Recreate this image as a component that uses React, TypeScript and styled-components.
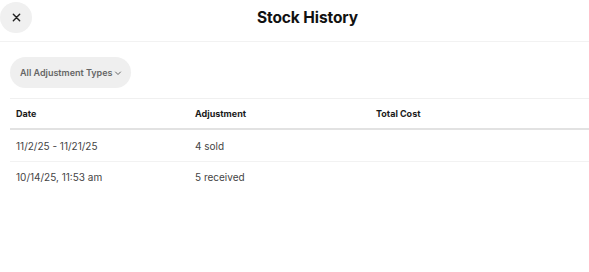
import React from "react";
import styled, { createGlobalStyle } from "styled-components";

const Global = createGlobalStyle`
  html, body { margin: 0; padding: 0; background: #fff; }
  body { font-family: Inter, "Noto Sans", Arial, sans-serif; color: #1a1a1a; -webkit-font-smoothing: antialiased; }
`;

const Page = styled.div`
  width: 589px;
  height: 272px;
  overflow: hidden;
  background: #fff;
`;

const Header = styled.header`
  display: grid;
  grid-template-columns: 32px 1fr;
  align-items: start;
  height: 42px;
  border-bottom: 1px solid #f2f2f2;
  box-sizing: border-box;
`;

const CloseButton = styled.button`
  width: 32px;
  height: 31px;
  margin-top: 2px;
  border: none;
  border-radius: 50%;
  background: #f0f0f0;
  display: flex;
  align-items: center;
  justify-content: center;
  padding: 0;
  cursor: pointer;
`;

const Title = styled.h1`
  margin: 0 6px 0 0;
  justify-self: center;
  line-height: 36px;
  font-size: 15.5px;
  font-weight: 700;
  letter-spacing: -0.1px;
  color: #111;
`;

const Body = styled.div`
  padding: 15px 0 0 10px;
`;

const FilterPill = styled.button`
  display: inline-flex;
  align-items: center;
  gap: 2px;
  height: 31px;
  padding: 0 9px 0 10px;
  border: none;
  border-radius: 16px;
  background: #efefef;
  font-family: inherit;
  font-size: 9px;
  font-weight: 600;
  color: #666;
  cursor: pointer;
`;

const Table = styled.div`
  margin-top: 10px;
  border-top: 1px solid #f0f0f0;
`;

const Row = styled.div<{ $head?: boolean }>`
  display: grid;
  grid-template-columns: 179px 181px 1fr;
  align-items: center;
  padding-left: 6px;
  height: ${(p) => (p.$head ? "29px" : "31px")};
  border-bottom: ${(p) => (p.$head ? "2px solid #e2e2e2" : "1px solid #f2f2f2")};
  font-size: ${(p) => (p.$head ? "9px" : "10px")};
  font-weight: ${(p) => (p.$head ? 700 : 400)};
  color: ${(p) => (p.$head ? "#1a1a1a" : "#444")};
  box-sizing: content-box;
`;

const LastRow = styled(Row)`
  height: 30px;
  border-bottom: none;
`;

const Cell = styled.div``;

export default function App() {
  return (
    <Page>
      <Global />
      <Header>
        <CloseButton aria-label="Close">
          <svg width="9" height="9" viewBox="0 0 10 10">
            <path d="M1.5 1.5 L8.5 8.5 M8.5 1.5 L1.5 8.5" stroke="#222" strokeWidth="1.6" strokeLinecap="round" />
          </svg>
        </CloseButton>
        <Title>Stock History</Title>
      </Header>
      <Body>
        <FilterPill>
          All Adjustment Types
          <svg width="8" height="8" viewBox="0 0 8 8">
            <path d="M1.5 3 L4 5.5 L6.5 3" stroke="#666" strokeWidth="1" fill="none" strokeLinecap="round" />
          </svg>
        </FilterPill>
        <Table>
          <Row $head>
            <Cell>Date</Cell>
            <Cell>Adjustment</Cell>
            <Cell>Total Cost</Cell>
          </Row>
          <Row>
            <Cell>11/2/25 - 11/21/25</Cell>
            <Cell>4 sold</Cell>
            <Cell></Cell>
          </Row>
          <LastRow>
            <Cell>10/14/25, 11:53 am</Cell>
            <Cell>5 received</Cell>
            <Cell></Cell>
          </LastRow>
        </Table>
      </Body>
    </Page>
  );
}
